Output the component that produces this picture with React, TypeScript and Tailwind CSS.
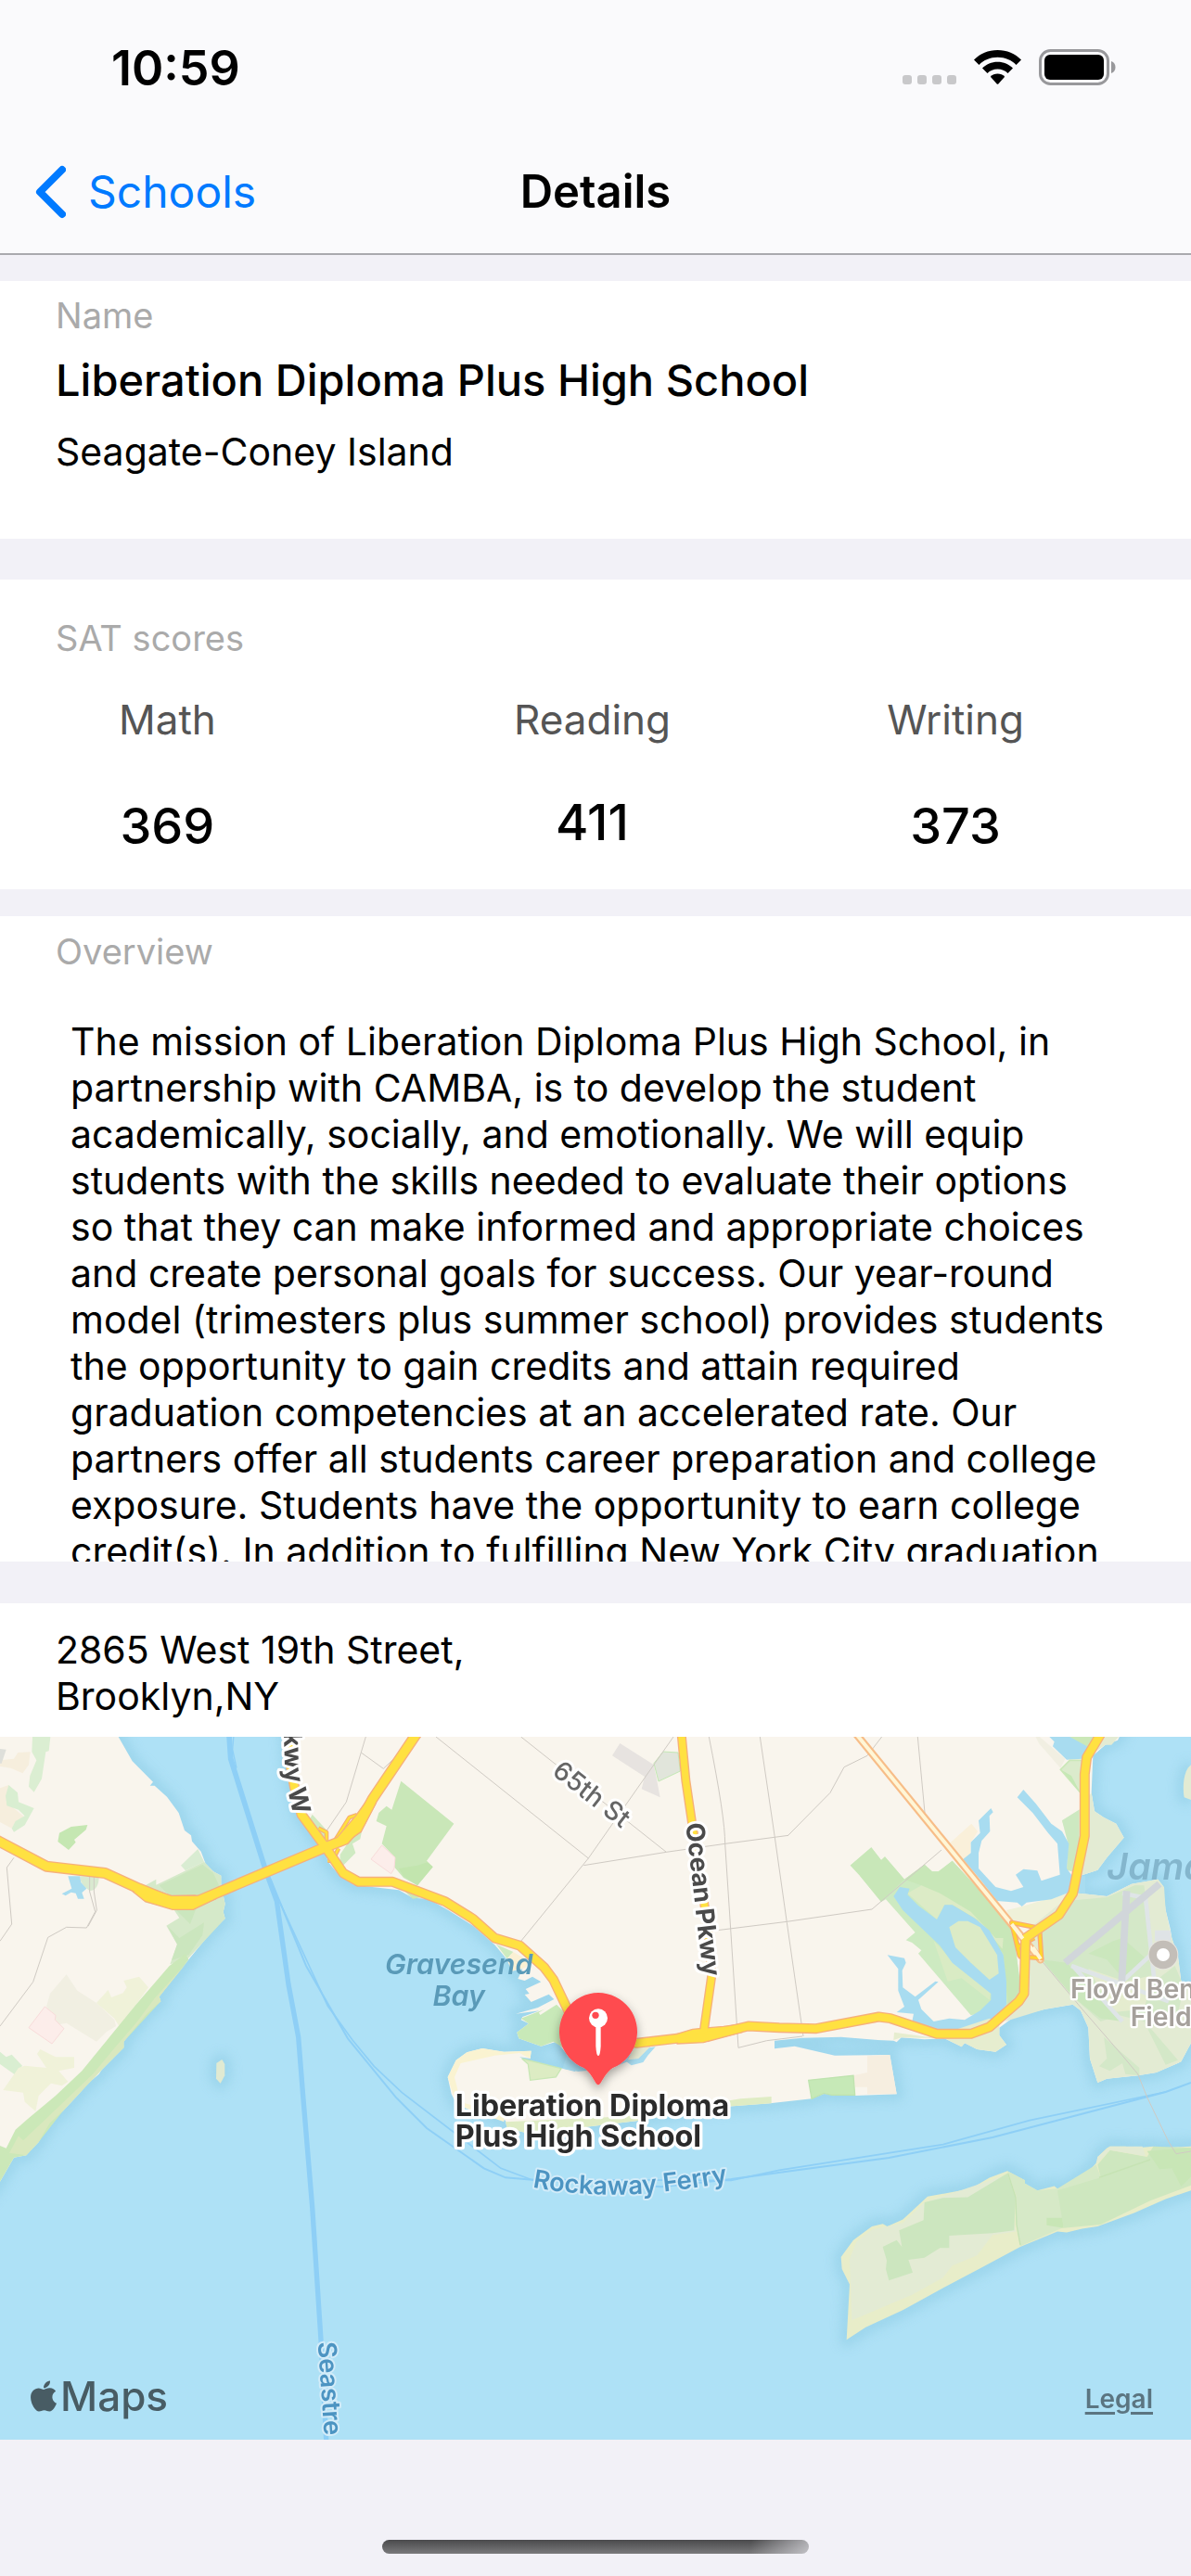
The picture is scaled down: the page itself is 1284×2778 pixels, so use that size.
import React from "react";
import { FaApple } from "react-icons/fa";

const school = {
  name: "Liberation Diploma Plus High School",
  area: "Seagate-Coney Island",
  overview:
    "The mission of Liberation Diploma Plus High School, in partnership with CAMBA, is to develop the student academically, socially, and emotionally. We will equip students with the skills needed to evaluate their options so that they can make informed and appropriate choices and create personal goals for success. Our year-round model (trimesters plus summer school) provides students the opportunity to gain credits and attain required graduation competencies at an accelerated rate. Our partners offer all students career preparation and college exposure. Students have the opportunity to earn college credit(s). In addition to fulfilling New York City graduation",
};

function StatusBar() {
  return (
    <div className="flex items-center justify-between pt-[47px] pr-[81px] pl-[120px]">
      <time className="text-[52px] leading-[54px] font-semibold">10:59</time>
      <svg className="h-[54px] w-[232px]" viewBox="0 0 232 54" role="img" aria-label="Wi-Fi, battery full">
        <g fill="#c8c8ca">
          <rect x="2" y="34" width="10" height="10" rx="3" />
          <rect x="18" y="34" width="10" height="10" rx="3" />
          <rect x="34" y="34" width="10" height="10" rx="3" />
          <rect x="50" y="34" width="10" height="10" rx="3" />
        </g>
        <g transform="translate(79 7)">
          <path d="M25.500 0C35.500 0 44.500 4 51 10.500L45.500 16C40.500 10.800 33.500 7.800 25.500 7.800S10.500 10.800 5.500 16L0 10.500C6.500 4 15.500 0 25.500 0Z" />
          <path d="M25.500 12.800C31.900 12.800 37.700 15.400 42 19.600L36.500 25C33.700 22.200 29.800 20.500 25.500 20.500S17.300 22.200 14.500 25L9 19.600C13.300 15.400 19.100 12.800 25.500 12.800Z" />
          <path d="M25.500 25.500C28.500 25.500 31.200 26.700 33.200 28.700L26.500 36.300Q25.500 37.400 24.500 36.300L17.800 28.700C19.800 26.700 22.500 25.500 25.500 25.500Z" />
        </g>
        <rect x="150.500" y="7.500" width="73" height="36" rx="11" fill="none" stroke="#98989b" strokeWidth="3" />
        <rect x="155" y="12" width="64" height="27" rx="6" />
        <path d="M227 19v13c3-1 4.500-3.500 4.500-6.500s-1.500-5.500-4.500-6.500z" fill="#98989b" />
      </svg>
    </div>
  );
}

const westLand =
  "M-60 -20H350L383 39L428 118L495 185L485 197H500L540 233L578 285L597 342L618 358L621 377L650 410L665 450L690 475L715 488V520L728 580L722 605L728 627L685 668L610 760L578 798L515 880L520 895L475 935L400 1025V1045L330 1115L320 1130L285 1160L250 1200L203 1250L160 1290L125 1350L85 1393L45 1400L0 1478L-60 1550Z";

const brooklyn =
  "M920 -20L925 39L930 130L945 210L965 290L1050 410L1062 445L1100 490L1145 518L1290 535L1335 560L1385 563L1450 600L1530 650L1600 712L1640 760L1655 797L1690 790L1675 822L1697 828L1722 815L1750 832L1700 855L1712 870L1697 873L1718 897L1775 872L1792 888L1740 915L1668 935L1745 925L1690 945L1685 955L1710 967L1672 995L1678 1015L1750 1040L1800 1025L1825 1055L1870 1100L1860 1122L1820 1112L1710 1090L1680 1075L1715 1080L1718 1055L1630 1058L1560 1047L1510 1060L1475 1085L1448 1140L1460 1195L1475 1225L1505 1240L1635 1280L1640 1305L1700 1320L1820 1310L2070 1280L2290 1240L2490 1225L2625 1210L2665 1194L2710 1198L2765 1200L2900 1195L2878 1068L2700 1070L2570 1040L2505 1048V1022L2595 1013L2720 1010L2840 1020L2890 1022L2900 1027L2915 1012L2990 1018L3055 1015L3110 1042L3120 1030L3160 1050L3220 1058L3255 1035L3232 1005V980L3280 945L3380 920L3470 905L3495 925L3520 980L3525 1080L3550 1158L3580 1145L3680 1135L3740 1125L3820 1090L3852 1030V850L3820 830L3810 750L3790 690L3785 660L3770 600L3760 520L3745 500L3660 515L3580 555L3490 545V490L3550 470L3580 430L3635 365L3610 320L3570 300L3540 280L3530 220L3535 100L3575 65L3615 50L3650 -20Z";

const rockaway =
  "M218 877L228 715L203 670L200 635L240 585L300 545L335 538L350 545L400 525L480 458L620 435L680 403L738 383L795 410V420L835 440L890 427L900 435L930 430L1000 385L1025 360L1030 342L1060 316L1070 311H1120L1140 317L1210 311L1220 325L1250 315L1400 308V425L1332 440L1250 465L1150 505L1030 545L980 552L930 563L900 560L780 605L650 668L520 730L400 790L280 840Z";

const belt =
  "M935 20L938 120L952 200L975 290L1052 395L1110 480L1160 508H1270L1440 572L1530 628L1600 690L1682 715L1760 785L1790 825L1840 930L1900 1020L2060 1030L2190 1015L2275 1010L2420 975L2520 980L2640 983L2842 945L2880 950L3030 1000H3140L3200 978L3295 895L3312 870L3317 690L3360 660L3425 615L3470 545L3508 360V160L3515 105L3560 30";

const verrazzano =
  "M-20 368L150 458L340 480L450 530L560 575H628L1055 395L1115 372L1165 315L1205 240L1350 25";

const ocean = "M2203 20L2218 180L2240 330L2290 660L2302 810L2275 1000";

function MapDrawing() {
  return (
    <svg viewBox="0 39 3852 2274" className="block h-auto w-full bg-[#aee1f6]" role="img" aria-label="Map of Brooklyn around Coney Island">
      <defs>
        <filter id="shore" x="-5%" y="-5%" width="110%" height="110%">
          <feGaussianBlur stdDeviation="16" />
        </filter>
        <filter id="pinShadow" x="-30%" y="-30%" width="160%" height="160%">
          <feDropShadow dx="0" dy="14" stdDeviation="16" floodColor="#000" floodOpacity=".35" />
        </filter>
        <path id="kwyPath" d="M918 25L921 150L931 215L960 340" />
        <path id="ferryPath" d="M1722 1496Q1860 1522 2010 1520T2420 1468" />
      </defs>

      {/* Shallow water along the shores */}
      <g fill="none" stroke="#93cfe6" strokeWidth="44" strokeLinejoin="round" opacity=".6" filter="url(#shore)">
        <path d={westLand} />
        <path d={brooklyn} />
        <path d={rockaway} transform="translate(2520 1020) scale(1 1.106)" />
        <path d="M3852 130C3825 150 3825 210 3830 235L3852 243" />
        <path d="M700 1095L718 1083L727 1098V1135L713 1160L699 1145Z" />
      </g>

      {/* Ferry routes */}
      <g fill="none" stroke="#8ecff6">
        <path d="M740 20L746 110L862 480" strokeWidth="17" />
        <path d="M757 20L752 80L765 140" strokeWidth="4" />
        <path d="M862 480L895 570L933 840L965 1010L980 1200L1010 1560L1038 1990L1056 2330" strokeWidth="16" />
        <path d="M875 500L990 780L1125 1015L1280 1205L1380 1305L1565 1435L1635 1465L1740 1474L2140 1495L2365 1470L2540 1446L2875 1401L3210 1335L3770 1188L3852 1158" strokeWidth="6" />
        <path d="M880 520L1000 780L1060 910L1140 1020L1210 1105L1300 1190L1620 1435L1720 1472L2365 1474L2520 1441L3050 1358L3330 1280L3770 1188" strokeWidth="5" />
      </g>

      {/* Staten Island */}
      <path d={westLand} fill="#f9f5ed" />
      <path d="M105 39H163L158 85L148 88L135 175L110 218L93 200L97 165L118 115L103 88Z" fill="#dbeed2" />
      <path d="M0 115L45 110L58 90L98 88L93 130L73 157L35 140L0 135ZM0 205L28 195L20 250L78 298L50 315L38 335L0 315Z" fill="#f6eedd" />
      <path d="M0 78L20 80L5 125H0Z" fill="#dedfda" />
      <path d="M28 195L57 220L60 250L110 270L80 325L45 347L38 335L50 312L80 295L60 275L22 262L18 230ZM0 1058L20 1075L38 1067L72 1103L50 1133L0 1098Z" fill="#d9eed1" />
      <path d="M192 350L230 330L283 324L278 340L240 372L245 380L222 405L187 378Z" fill="#c5e7b2" />
      <path d="M258 490H320C320 520 310 537 290 537C270 525 260 510 258 490Z" fill="#d9ead0" />
      <path d="M220 490H258L262 510L280 530L265 543L272 563H252L245 545L230 542L212 553L200 547L232 530Z" fill="#a8dcf0" />
      <path d="M215 808L250 860L312 900L370 955L375 975L345 993L312 1025L215 965L190 970L150 912L162 870Z" fill="#f1efe2" />
      <path d="M400 828L450 815L480 850L440 905L385 975L370 950L312 900L350 858L360 882L398 868L410 850ZM130 1050L180 1075H240V1110L190 1120L220 1155L200 1168L165 1160L125 1200L115 1250L80 1220L75 1190L10 1182L60 1110L80 1103L150 1110L120 1065Z" fill="#f0f2d9" />
      <path d="M93 980L145 912L180 940L178 955L207 983L168 1032Z" fill="#fcedea" stroke="#f8dcda" strokeWidth="3" />
      <path d="M585 455L640 402L660 443L600 472Z" fill="#d9ecd2" />
      <path d="M470 520L505 500V518L660 443L690 475L715 488V520L728 580L722 605L728 627L605 760L550 775L573 710L538 650L580 625L560 595L470 575Z" fill="#d5e9c9" />
      <path d="M515 520L655 452L690 480L713 530L640 570L560 565ZM570 600L640 580L615 645L595 625ZM542 652L580 690L660 640L655 680L610 745L555 762L573 710Z" fill="#cbe6be" />
      <path d="M548 780L600 742L610 760L515 880L520 895L400 1025V1045L285 1160L203 1250L125 1350L85 1393L45 1400L0 1478V1362L20 1370L50 1310L90 1275L180 1200L265 1120L440 905Z" fill="#cbe8b8" />
      <path d="M608 765L515 880L520 895L475 935L400 1025V1045L330 1115L250 1200L203 1250L160 1290L125 1350L85 1393L30 1385L60 1330L75 1345L180 1245L300 1130L375 1040L440 965L500 885Z" fill="#d9e8be" />
      <g fill="none" stroke="#cfcac3" strokeWidth="3">
        <path d="M45 430L22 462L38 645L0 700M290 492V540L308 605L280 657L215 655L155 688L107 832L0 975M304 492V540L313 600L285 652" />
      </g>
      <path d="M700 1095L718 1083L727 1098V1135L713 1160L699 1145Z" fill="#e0ead2" />

      {/* Brooklyn and Coney Island */}
      <path d={brooklyn} fill="#f9f5ed" />
      <path d="M1448 1140L1475 1085L1510 1060L1560 1047L1630 1058L1718 1055L1715 1080L1680 1062L1600 1070L1490 1095L1470 1140L1490 1220L1630 1262V1285L1505 1240L1475 1225Z" fill="#faf3d1" />
      <g transform="translate(1200 0)">
        <path d="M97 182L268 320L180 440L200 460L150 520L105 495L75 460L78 430L35 385L50 328L17 312L25 285L50 263L67 275Z" fill="#c9e7b8" />
        <path d="M105 490L90 465L150 455L182 445L200 460L150 520Z" fill="#c2e5ae" />
        <path d="M0 435L35 390L78 430L75 465L65 482Z" fill="#fcedea" stroke="#f8dcda" strokeWidth="3" />
        <path d="M780 100L805 60L915 130L935 235L875 208L885 168Z" fill="#e7e3e0" />
        <path d="M915 125L945 87L993 90L1000 150L930 183Z" fill="#e1e5db" stroke="#c3e8b4" strokeWidth="3" />
        <path d="M-190 290L-140 345V400L-200 310ZM-100 420L-60 360L-30 345L-35 370L-60 385L-50 415L-85 450L-100 465Z" fill="#cfeac2" />
        <path d="M100 530L150 535L185 555L135 563Z" fill="#cbe8b6" />
        <path d="M405 710L460 735L440 757Z" fill="#cdebc0" />
        <path d="M440 757L460 735L510 765L500 785L455 797Z" fill="#faf0d4" />
        <path d="M485 950L600 905L630 935V1050L590 1025L550 1040L478 1015L472 995L510 967Z" fill="#c8e9b8" />
        <path d="M545 935L600 900" stroke="#f9f5ed" strokeWidth="9" />
        <path d="M488 1080L615 1112L598 1140L515 1150L508 1098Z" fill="#dcecc3" stroke="#c8e7b5" strokeWidth="4" />
        <path d="M435 1285L860 1265L1195 1210L1295 1203V1225L1090 1240L870 1280L620 1310L500 1320L440 1305Z" fill="#dfecc4" />
        <path d="M640 1045L850 1045L840 1085L780 1110L670 1122L620 1112Z" fill="#a8dcf0" />
        <path d="M850 1045L905 1040L870 1080L830 1085Z" fill="#e8ebd3" />
        <path d="M820 1085L865 1080L900 1045L920 1042L895 1070L880 1092L842 1102Z" fill="#a8dcf0" />
      </g>

      <g transform="translate(2520 0)">
        {/* Marine Park */}
        <path d="M230 455L298 397L330 438L342 427L405 500L470 452L495 475H515L560 440L755 650L785 880L720 920L620 940L450 740L460 730L430 705L410 697L440 672L345 565L330 573L262 490L265 470Z" fill="#cdeac1" />
        <path d="M230 455L298 397L330 438L342 427L405 500L330 573L262 490ZM405 500L470 452L495 475H515L560 440L755 650L785 880L740 910L725 740L640 640L560 583L460 520Z" fill="#c8e7b8" />
        <path d="M415 545L460 520L520 545L620 605L700 690H725L722 725L640 630L560 583H535L510 630Z" fill="#dcebc6" />
        <path d="M500 700L560 760L685 860L680 890L590 820L545 830Z" fill="#d9ebc4" />
        <path d="M550 385L622 320L642 345L620 380L618 420L595 435Z" fill="#faf0da" />
        <path d="M370 555L390 525L422 530L415 550L450 585L510 630L535 583H560L630 625L680 665L725 745L735 830V905L700 950L620 980L590 985H490L430 960L435 935L380 930L405 912L385 860V790L350 745L405 755L410 770L398 795L400 850L440 880L505 830L515 832L450 890L460 920L500 960L550 950L600 955L650 925L685 890V870L560 770L520 715L400 600Z" fill="#a8dcf0" />
        <path d="M550 655L580 635H610L650 655L705 745L710 805L680 825L620 770L570 720Z" fill="#dcebc6" />
        {/* Belt Parkway north */}
        <path d="M1010 220L1020 280L1050 300L1090 320L1115 365L1060 430L1030 470L970 490L930 465L935 385L915 310L970 275Z" fill="#e3ebd3" />
        <path d="M915 310L970 275V480L930 470L935 385Z" fill="#cde9c1" />
        <path d="M820 20L925 110L910 140L840 60Z" fill="#f1efe2" />
        <path d="M855 20L890 55L885 70L930 113L980 110L1000 70L940 20Z" fill="#a8dcf0" />
        <path d="M940 39H1030L1000 72Z" fill="#cbe8b8" />
        <path d="M1010 95L1055 39H1098L1075 65L1055 65Z" fill="#e3ebd3" />
        <path d="M910 145L940 115H980L975 220Z" fill="#dbebcc" stroke="#cbe8b8" strokeWidth="5" />
        <path d="M915 148L945 165L975 222Z" fill="#c5e8b5" />
        <path d="M735 600L785 588L930 545L950 560L820 655L755 640Z" fill="#eff1d9" />
        <path d="M370 1020L372 995L480 1010L560 990L680 950L712 970V1005L735 1035L700 1058L640 1050L600 1030L590 1042L535 1015L395 1012Z" fill="#e6edcf" />
        <path d="M1332 130C1305 150 1305 210 1310 235L1332 243Z" fill="#e3ebd3" />
        {/* Floyd Bennett Field */}
        <path d="M820 650L930 560L970 545L1060 555L1140 515L1225 500L1245 525L1250 600L1270 690L1290 750L1300 830L1332 850V1030L1300 1090L1220 1125L1160 1135L1060 1145L1030 1158L1005 1080L1000 980L975 925L950 905L860 920L730 960L800 880L810 700Z" fill="#e3ebd3" />
        <path d="M830 670L930 570L1060 558L1150 520H1180L1200 640L1215 830L1280 780L1310 850L1290 930L1200 980L1290 1085L1250 1100L1180 960L1100 940L1040 960L950 880L860 775ZM1050 1010L1165 1110V1135L1120 1130L1110 1095L1070 1120L1035 1105L1060 1080Z" fill="#d4e8c8" />
        <path d="M850 760L930 770L1110 960L1040 950L1000 920L950 880ZM1000 740L1080 700L1110 690L1190 760L1120 830L1060 760Z" fill="#cbe7bd" />
        <path d="M1000 790L1120 830L1210 810L1180 920L1080 930Z" fill="#e5eccf" />
        <g fill="none">
          <path d="M945 780L1260 895M950 780L1110 960M1110 830L1250 700M1110 545L1185 560L1212 815" stroke="#dfe5e7" strokeWidth="14" />
          <path d="M1215 665H1265L1268 700H1215Z" fill="#dfe3e6" />
          <path d="M925 770L1230 515M1124 538L1108 830" stroke="#d1d6da" strokeWidth="23" />
        </g>
        {/* Inlets */}
        <path d="M990 545L930 545L880 565L800 575L785 588L770 575L705 570L650 500L595 435L620 415V380L650 350L645 310L685 270L692 283L680 295L682 345L655 375L645 415V465L700 525L750 538L790 525L765 485L790 467L835 472L848 505L908 485L900 385L870 350L820 285L770 235L790 210L830 255L880 320L915 345L937 385L930 465L945 485L990 490Z" fill="#a8dcf0" />
        {/* Manhattan Beach */}
        <path d="M285 1072L358 1068L380 1195H285V1172H245L240 1135L285 1125Z" fill="#f6eee0" />
        <path d="M95 1150L240 1135L245 1198H170L145 1192L105 1210Z" fill="#c6e9b7" stroke="#bfe3af" strokeWidth="4" />
      </g>

      {/* Rockaway peninsula */}
      <g transform="translate(2520 1020) scale(1 1.106)">
        <path d={rockaway} fill="#e8edc9" />
        <path d="M235 820L228 640L250 590L300 555L400 535L470 475L735 395L765 560L690 570L640 630L560 660L530 695L430 745Z" fill="#e3ebd4" />
        <path d="M470 475L530 462L610 460L738 390L765 460L760 557L690 565L550 572V608H520L470 637L418 643L432 680L355 703L345 670L348 645L335 605L380 585L397 605L388 557L467 527Z" fill="#cce6bf" />
        <path d="M738 383L795 410V420L835 440L900 435L1025 365L1040 400L915 550L780 603L765 530L768 460Z" fill="#d6e9c7" />
        <path d="M900 440L1040 402L1030 365L1070 322L1190 342L1210 311L1332 315V425L1200 470L1040 540L920 550Z" fill="#cee7bf" />
        <path d="M1028 360L1030 342L1070 311H1175L1185 340L1070 322Z" fill="#e3ebd4" />
        <path d="M1190 325L1332 315V400L1300 428L1270 375L1230 378ZM865 520H915L920 550L865 542Z" fill="#c8e6b6" />
        <path d="M740 390L765 460L768 540L780 600M1035 402L1200 350" fill="none" stroke="#c6e3b4" strokeWidth="4" />
      </g>

      {/* District boundaries */}
      <g fill="none" stroke="#cfcac3" strokeWidth="3">
        <path d="M1183 39L1120 250L1055 345M1168 90L1240 142L1290 95M1410 39L1903 432M1685 39L2155 412M2178 39L1903 432L1685 700M1888 455L2155 412L2345 385L2550 358H2549M2293 39Q2345 300 2345 385L2363 660L2388 1045L2480 1022L2595 1008M2458 39L2505 358L2545 640L2598 1008M2320 665L2545 637L2820 597L3045 405M2549 358L2685 220L2730 137L2805 100L2852 39M2968 39L2992 295" />
        <path d="M3370 765L3500 920L3630 1070L3680 1130L3710 1205L3780 1350L3804 1388L3852 1380" />
      </g>

      {/* Roads */}
      <g fill="none" strokeLinejoin="round">
        <path d="M2765 25L3365 760" stroke="#f7bd88" strokeWidth="25" strokeLinecap="round" />
        <path d="M2765 25L3365 760" stroke="#fff6d6" strokeWidth="12" strokeLinecap="round" />
        <path d="M3272 640L3362 658L3368 755L3300 750ZM3272 640L3298 750M3290 720L3345 690" stroke="#f9a878" strokeWidth="16" />
        <path d="M3272 640L3362 658L3368 755L3300 750ZM3272 640L3298 750M3290 720L3345 690" stroke="#ffd52f" strokeWidth="9" />
        <path d="M1030 335L1056 348V395M1080 380L1130 300L1155 292M1060 440L1075 440L1095 400" stroke="#f6aa72" strokeWidth="14" />
        <path d="M1030 335L1056 348V395M1080 380L1130 300L1155 292M1060 440L1075 440L1095 400" stroke="#ffdf3d" strokeWidth="8" />
        <g stroke="#f6b07a">
          <path d={ocean} strokeWidth="30" />
          <path d={belt} strokeWidth="33" />
          <path d={verrazzano} strokeWidth="36" />
        </g>
        <g fill="#ffe141" stroke="#f6b07a" strokeWidth="4">
          <path d="M430 540L470 572L558 598H625L700 562L630 552L555 553L470 525Z" />
          <path d="M1085 390L1112 386L1168 346L1215 255L1190 240L1150 295L1090 365Z" />
          <path d="M2190 1000L2240 985L2340 976L2400 968V995L2275 1028L2190 1032Z" />
        </g>
        <g stroke="#ffe141">
          <path d={ocean} strokeWidth="22" />
          <path d={belt} strokeWidth="25" />
          <path d={verrazzano} strokeWidth="28" />
        </g>
        <path d="M3272 645L3308 692M3340 720L3366 758" stroke="#fff6d6" strokeWidth="12" />
      </g>

      {/* Field marker */}
      <circle cx="3762" cy="744" r="49" fill="#e8e6e0" />
      <circle cx="3762" cy="744" r="46" fill="#c3beb8" />
      <circle cx="3762" cy="744" r="21" fill="#fff" />

      {/* Labels */}
      <g strokeLinejoin="round" style={{ paintOrder: "stroke" }}>
        <g fill="#5a9ab8" fontStyle="italic" fontWeight="600" fontSize="91" textAnchor="middle">
          <text x="1484" y="808">Gravesend</text>
          <text x="1484" y="908">Bay</text>
        </g>
        <text x="3580" y="500" fill="#84b6cd" fontStyle="italic" fontWeight="600" fontSize="118">Jamaica</text>
        <g fill="#a5a09b" stroke="#fff" strokeWidth="14" fontWeight="600" fontSize="85">
          <text x="3462" y="885">Floyd Bennett</text>
          <text x="3656" y="975">Field</text>
        </g>
        <g stroke="#fff" strokeWidth="18">
          <text transform="translate(1782 158) rotate(38)" fill="#666" fontWeight="500" fontSize="84">65th St</text>
          <text transform="translate(2218 320) rotate(83.500)" fill="#4a4a4a" fontWeight="700" fontSize="82">Ocean Pkwy</text>
          <text fill="#4a4a4a" fontWeight="700" fontSize="82">
            <textPath href="#kwyPath">kwy W</textPath>
          </text>
        </g>
        <g fill="#4c94c2" stroke="#d3ecf9" strokeWidth="12" fontWeight="600" fontSize="82">
          <text>
            <textPath href="#ferryPath">Rockaway Ferry</textPath>
          </text>
          <text transform="translate(1028 1998) rotate(86)">Seastre</text>
        </g>
        <g fill="#2b2b2b" stroke="#fff" strokeWidth="20" fontWeight="700" fontSize="97">
          <text x="1472" y="1267">Liberation Diploma</text>
          <text x="1472" y="1365">Plus High School</text>
        </g>
      </g>

      {/* School pin */}
      <path d="M1935 1165C1925 1165 1918 1130 1888 1110A126 126 0 1 1 1982 1110C1952 1130 1945 1165 1935 1165Z" fill="#ff4b50" filter="url(#pinShadow)" />
      <circle cx="1935" cy="949" r="30" fill="#fff" />
      <circle cx="1926" cy="940" r="11" fill="#ff4b50" />
      <path d="M1927 975H1943V1040Q1941 1071 1935 1071T1927 1040Z" fill="#fff" />
    </svg>
  );
}

function Score({ label, value, className }: { label: string; value: string; className: string }) {
  return (
    <div className={`flex flex-col items-center ${className}`}>
      <dt className="text-[44px] leading-[52px] text-[#555]">{label}</dt>
      <dd className="text-[54px] leading-[62px] font-medium">{value}</dd>
    </div>
  );
}

export default function App() {
  return (
    <div className="min-h-screen bg-[#f2f1f7] font-['Inter',sans-serif] text-black">
      <header className="border-b-2 border-[#a9a9ae] bg-[#fafafc] pb-[35px]">
        <StatusBar />
        <nav className="mt-[75px] grid grid-cols-3 items-center px-[37px] leading-[62px]">
          <a href="#schools" className="flex items-center gap-6 text-[48px] text-[#007aff]">
            <svg className="h-[58px] w-[34px]" viewBox="0 0 34 58" fill="none" stroke="currentColor" strokeWidth="8" strokeLinecap="round" strokeLinejoin="round" aria-hidden="true">
              <path d="M30 5L6 29L30 53" />
            </svg>
            Schools
          </a>
          <h1 className="text-center text-[49px] font-semibold">Details</h1>
        </nav>
      </header>

      <main>
        <section className="mt-7 bg-white px-[60px] pt-3 pb-[69px]">
          <p className="text-[38px] leading-[50px] text-[#aaa]">Name</p>
          <h2 className="mt-[15px] text-[47px] leading-[60px] font-medium">{school.name}</h2>
          <p className="mt-[22px] text-[41px] leading-[50px]">{school.area}</p>
        </section>

        <section className="mt-11 bg-white px-[60px] pt-[38px] pb-[37px]">
          <h3 className="text-[38px] leading-[50px] text-[#aaa]">SAT scores</h3>
          <dl className="mt-[37px] flex justify-between">
            <Score label="Math" value="369" className="ml-[68px] gap-[58px]" />
            <Score label="Reading" value="411" className="ml-[88px] gap-[54px]" />
            <Score label="Writing" value="373" className="mr-[120px] gap-[58px]" />
          </dl>
        </section>

        <section className="mt-[29px] bg-white px-[60px] pt-[13px]">
          <h3 className="text-[38px] leading-[50px] text-[#aaa]">Overview</h3>
          <p className="mt-[47px] h-[586px] overflow-hidden pr-6 pl-4 text-[41px] leading-[50px]">{school.overview}</p>
        </section>

        <section className="mt-[45px] bg-white">
          <address className="px-[60px] pt-[25px] pb-[19px] text-[41px] leading-[50px] not-italic">
            2865 West 19th Street,
            <br />
            Brooklyn,NY
          </address>
          <div className="relative">
            <MapDrawing />
            <div className="absolute bottom-[20px] left-[31px] flex items-center gap-0.5 text-[#485c64]">
              <FaApple className="h-[38px] w-8" aria-hidden="true" />
              <span className="text-[44px] leading-[54px] font-medium">Maps</span>
            </div>
            <a href="#legal" className="absolute right-[41px] bottom-[26px] text-[28px] leading-[36px] font-semibold text-[#5b7581] underline decoration-[3px] underline-offset-4">
              Legal
            </a>
          </div>
        </section>
      </main>

      <footer className="flex justify-center pt-[108px] pb-6">
        <div className="h-[15px] w-[460px] rounded-full bg-[linear-gradient(100deg,transparent_86%,#f2f1f799_100%),linear-gradient(#4a4a4c,#7a7a7c)]" />
      </footer>
    </div>
  );
}
